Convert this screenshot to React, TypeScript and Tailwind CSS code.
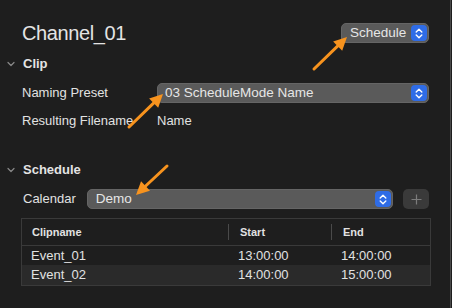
import React from "react";

function Stepper({ className = "" }: { className?: string }) {
  return (
    <div className={`flex items-center justify-center rounded-[4px] bg-[#2f6ce6] ${className}`}>
      <svg width="8" height="11" viewBox="0 0 8 11" fill="none">
        <path d="M1.2 4 L4 1.3 L6.8 4" stroke="white" strokeWidth="1.4" strokeLinecap="round" strokeLinejoin="round" />
        <path d="M1.2 7 L4 9.7 L6.8 7" stroke="white" strokeWidth="1.4" strokeLinecap="round" strokeLinejoin="round" />
      </svg>
    </div>
  );
}

function Popup({ label, className = "", textClass = "" }: { label: string; className?: string; textClass?: string }) {
  return (
    <div className={`flex items-center justify-between rounded-[5px] bg-[#5a5a5a] border border-[#656565] pr-px ${className}`}>
      <span className={`text-[13.5px] text-[#e6e6e6] leading-none ${textClass}`}>{label}</span>
      <Stepper className="w-[16px] h-[16px]" />
    </div>
  );
}

function Chevron() {
  return (
    <svg width="8" height="6" viewBox="0 0 8 6" fill="none" className="mr-[8px]">
      <path d="M1 1.5 L4 4.5 L7 1.5" stroke="#8a8a8a" strokeWidth="1.2" strokeLinecap="round" strokeLinejoin="round" />
    </svg>
  );
}

function Arrow({ x1, y1, x2, y2 }: { x1: number; y1: number; x2: number; y2: number }) {
  const dx = x2 - x1;
  const dy = y2 - y1;
  const len = Math.sqrt(dx * dx + dy * dy);
  const ux = dx / len;
  const uy = dy / len;
  const hl = 13;
  const hw = 6.5;
  const bx = x2 - ux * hl;
  const by = y2 - uy * hl;
  const px = -uy;
  const py = ux;
  const pts = `${x2},${y2} ${bx + px * hw},${by + py * hw} ${bx - px * hw},${by - py * hw}`;
  return (
    <g>
      <line x1={x1} y1={y1} x2={bx + ux * 2} y2={by + uy * 2} stroke="#f7931e" strokeWidth="3" strokeLinecap="round" />
      <polygon points={pts} fill="#f7931e" />
    </g>
  );
}

export default function App() {
  return (
    <div
      className="relative w-[452px] h-[308px] bg-[#1e1e1e] overflow-hidden"
      style={{ fontFamily: '"Liberation Sans", Arial, sans-serif' }}
    >
      <div className="w-[451px] h-full border-r border-[#4a4a4a] pl-[22px] pr-[21px] flex flex-col">
        {/* Title row */}
        <div className="flex items-center justify-between mt-[23px] h-[20px]">
          <span className="text-[20px] leading-none text-[#e4e4e4] tracking-[-0.4px]">Channel_01</span>
          <Popup label="Schedule" className="w-[88px] h-[20px] pl-[8px]" />
        </div>

        {/* Clip section */}
        <div className="flex items-center h-[18px] mt-[12px] -ml-[15px]">
          <Chevron />
          <span className="text-[13px] font-bold text-[#e4e4e4]">Clip</span>
        </div>
        <div className="flex items-center h-[20px] mt-[10px]">
          <span className="w-[135px] text-[13px] text-[#e2e2e2]">Naming Preset</span>
          <Popup label="03 ScheduleMode Name" className="flex-1 h-[20px] pl-[7px]" />
        </div>
        <div className="flex items-center h-[20px] mt-[8px]">
          <span className="w-[135px] text-[13px] text-[#e2e2e2] whitespace-nowrap">Resulting Filename</span>
          <span className="text-[13px] text-[#e2e2e2]">Name</span>
        </div>

        {/* Schedule section */}
        <div className="flex items-center h-[18px] mt-[30px] -ml-[15px]">
          <Chevron />
          <span className="text-[13px] font-bold text-[#e4e4e4]">Schedule</span>
        </div>
        <div className="flex items-center h-[20px] mt-[10px]">
          <span className="w-[65px] pl-px text-[13px] text-[#e2e2e2]">Calendar</span>
          <Popup label="Demo" className="w-[307px] h-[20px] pl-[8px]" />
          <div className="ml-[10px] w-[26px] h-[20px] rounded-[5px] bg-[#3a3a3a] flex items-center justify-center">
            <svg width="11" height="11" viewBox="0 0 11 11">
              <path d="M5.5 0.5 V10.5 M0.5 5.5 H10.5" stroke="#7c7c7c" strokeWidth="1.2" />
            </svg>
          </div>
        </div>

        {/* Table */}
        <div className="mt-[9px] -ml-px w-[410px] border border-[#3a3a3a] text-[#e2e2e2]">
          <div className="flex h-[27px] border-b border-[#3a3a3a] items-center text-[11px] font-semibold">
            <div className="w-[206px] pl-[10px]">Clipname</div>
            <div className="w-[103px] h-[16px] flex items-center border-l border-[#4a4a4a] pl-[11px]">Start</div>
            <div className="flex-1 h-[16px] flex items-center border-l border-[#4a4a4a] pl-[11px]">End</div>
          </div>
          <div className="flex h-[19px] items-center text-[13px]">
            <div className="w-[206px] pl-[9px]">Event_01</div>
            <div className="w-[103px] pl-[10px]">13:00:00</div>
            <div className="flex-1 pl-[10px]">14:00:00</div>
          </div>
          <div className="flex h-[20px] items-center text-[13px] bg-[#2a2a2a]">
            <div className="w-[206px] pl-[9px]">Event_02</div>
            <div className="w-[103px] pl-[10px]">14:00:00</div>
            <div className="flex-1 pl-[10px]">15:00:00</div>
          </div>
        </div>
      </div>

      <svg className="absolute inset-0 pointer-events-none" width="452" height="308" viewBox="0 0 452 308">
        <Arrow x1={314} y1={69} x2={347} y2={37} />
        <Arrow x1={129} y1={127} x2={163} y2={94} />
        <Arrow x1={167} y1={166} x2={136} y2={195} />
      </svg>
    </div>
  );
}
